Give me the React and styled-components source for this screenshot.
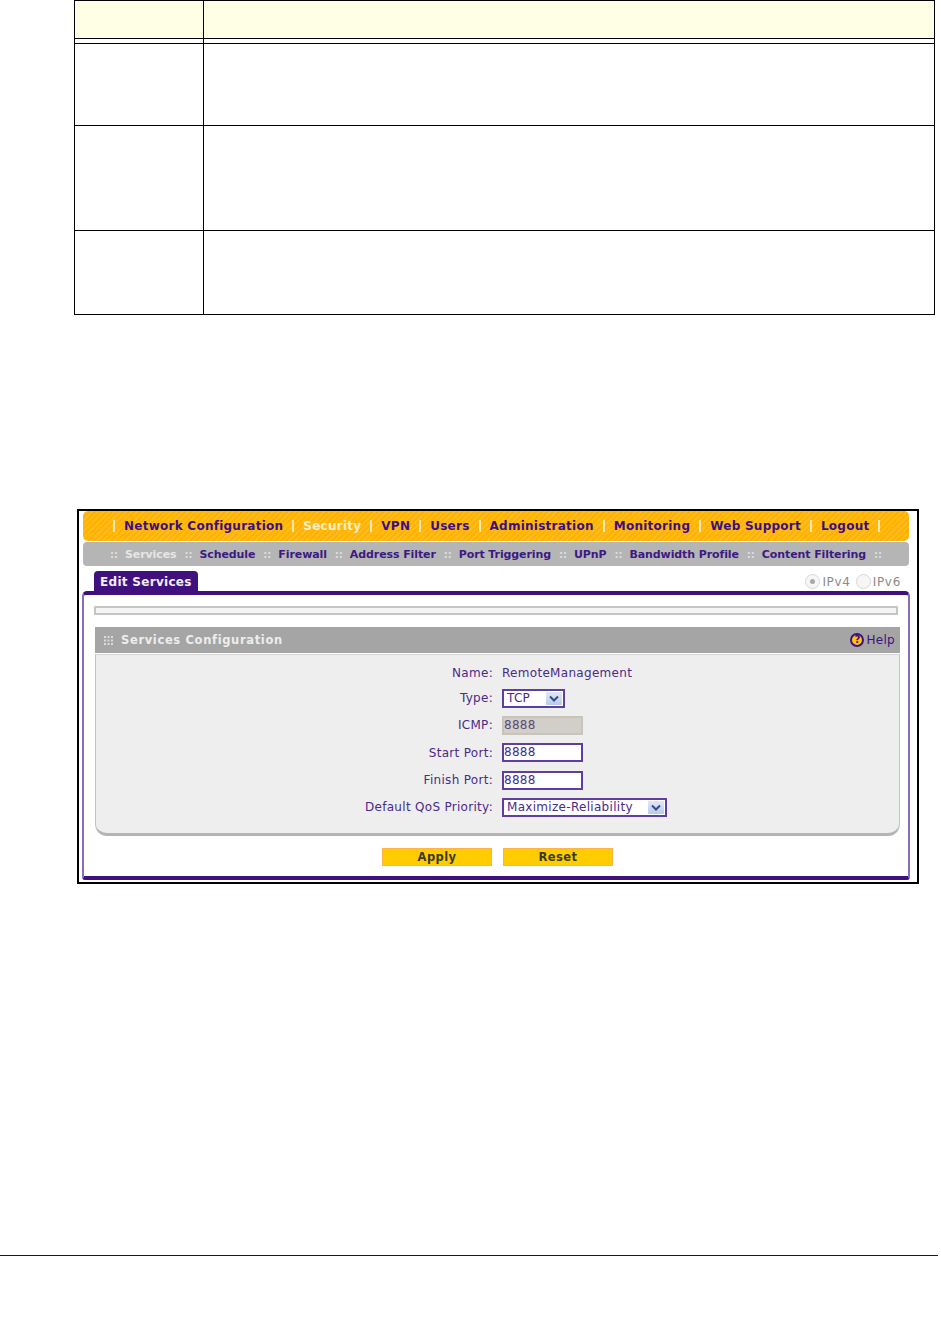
import React from "react"
import styled, { createGlobalStyle } from "styled-components"

const GlobalStyle = createGlobalStyle`
	html, body {
		margin: 0;
		padding: 0;
		background: #fff;
	}
	body {
		font-family: "DejaVu Sans", Verdana, sans-serif;
	}
`

const Page = styled.div`
	width: 941px;
	height: 1323px;
	overflow: hidden;
	display: flex;
	flex-direction: column;
`

/* manual table: only the rules survive, the cells are empty */
const DocTable = styled.div`
	margin-left: 74px;
	width: 861px;
	box-sizing: border-box;
	border-left: 1px solid #000;
	border-right: 1px solid #000;
	border-bottom: 1px solid #000;
`

const DocRow = styled.div`
	display: grid;
	grid-template-columns: 129px 1fr;
	height: ${(p) => p.$height}px;
	box-sizing: border-box;
	border-bottom: ${(p) => (p.$last ? "none" : "1px solid #000")};
	background: ${(p) => (p.$head ? "#ffffe5" : "#fff")};
	border-top: ${(p) => (p.$head ? "1px solid #000" : "none")};
`

const DocCell = styled.div`
	border-right: ${(p) => (p.$first ? "1px solid #000" : "none")};
`

const Shot = styled.div`
	margin: 194px 0 0 77px;
	width: 842px;
	height: 375px;
	box-sizing: border-box;
	border: 2px solid #000;
	padding: 0 8px 2px 4px;
	display: flex;
	flex-direction: column;
	background: #fff;
`

const TopNav = styled.div`
	height: 30px;
	flex: none;
	display: flex;
	align-items: center;
	padding-left: 30px;
	border-radius: 5px;
	background: repeating-linear-gradient(135deg, #ffb300 0 2px, #ffba1c 2px 4px);
`

const TopItem = styled.span`
	font-size: 12px;
	font-weight: 700;
	letter-spacing: 0.25px;
	line-height: 32px;
	white-space: nowrap;
	color: ${(p) => (p.$active ? "#ffefc0" : "#3c0f80")};
`

const TopSep = styled.span`
	width: 2px;
	height: 12px;
	flex: none;
	margin: 0 9px 0 ${(p) => p.$before ?? 9}px;
	background: #ffeab4;
`

const SubNav = styled.div`
	height: 24px;
	margin-top: 1px;
	flex: none;
	display: flex;
	align-items: center;
	padding-left: 26px;
	border-radius: 4px;
	background: #b5b5b5;
`

const SubItem = styled.span`
	font-size: 11px;
	font-weight: 700;
	letter-spacing: -0.1px;
	white-space: nowrap;
	color: ${(p) => (p.$active ? "#e6e6e6" : "#3c1a82")};
`

const SubSep = styled.span`
	font-size: 10px;
	font-weight: 700;
	color: #dedede;
	margin: 0 7px 0 ${(p) => p.$left ?? 8}px;
`

const TabRow = styled.div`
	height: 25px;
	flex: none;
	display: flex;
	align-items: flex-end;
	justify-content: space-between;
	padding: 0 8px 0 11px;
`

const Tab = styled.div`
	width: 104px;
	height: 20px;
	box-sizing: border-box;
	padding-left: 6px;
	border-radius: 4px 4px 0 0;
	background: #40107f;
	color: #f2eef8;
	font-size: 12px;
	font-weight: 700;
	letter-spacing: 0.3px;
	line-height: 23px;
	white-space: nowrap;
`

const IpToggle = styled.div`
	display: flex;
	align-items: center;
	height: 21px;
	margin-bottom: -1px;
	font-size: 12px;
	letter-spacing: 0.7px;
	color: #8a8a8a;
`

const Radio = styled.span`
	width: 15px;
	height: 15px;
	box-sizing: border-box;
	margin: 0 2px 0 ${(p) => p.$offset || 0}px;
	border-radius: 50%;
	border: 1px solid #d8d8d8;
	background: #f6f6f6;
	display: flex;
	align-items: center;
	justify-content: center;

	&::after {
		content: "";
		display: ${(p) => (p.$checked ? "block" : "none")};
		width: 5px;
		height: 5px;
		border-radius: 50%;
		background: #a8a8a8;
	}
`

const Panel = styled.div`
	flex: 1;
	min-height: 0;
	margin: 0 -1px;
	box-sizing: border-box;
	border-top: 4px solid #40107f;
	border-left: 2px solid #8a6cb8;
	border-right: 2px solid #8a6cb8;
	border-bottom: 4px solid #40107f;
	border-radius: 5px 5px 3px 3px;
	padding: 11px 8px 0 11px;
	display: flex;
	flex-direction: column;
`

const ProgressBar = styled.div`
	height: 9px;
	width: 804px;
	margin-left: -1px;
	flex: none;
	box-sizing: border-box;
	border: 2px solid #c4c4c4;
	border-radius: 1px;
	background: #f4f4f4;
`

const SectionHead = styled.div`
	margin-top: 12px;
	height: 26px;
	flex: none;
	display: flex;
	align-items: center;
	background: #a5a5a5;
	padding: 0 5px 0 9px;
`

const Dots = styled.svg`
	width: 9px;
	height: 9px;
	margin-right: 8px;
	flex: none;
`

const SectionTitle = styled.span`
	flex: 1;
	font-size: 11.5px;
	font-weight: 700;
	letter-spacing: 0.65px;
	color: #ededed;
`

const Help = styled.span`
	display: flex;
	align-items: center;
	font-size: 12px;
	letter-spacing: 0.3px;
	color: #40107f;
`

const HelpBadge = styled.span`
	width: 14px;
	height: 14px;
	box-sizing: border-box;
	margin-right: 2px;
	border-radius: 50%;
	border: 2px solid #40107f;
	background: #ffc20e;
	color: #40107f;
	font-size: 10px;
	font-weight: 700;
	line-height: 10px;
	letter-spacing: 0;
	text-align: center;
`

const FormBox = styled.div`
	height: 182px;
	flex: none;
	margin-top: 1px;
	box-sizing: border-box;
	background: #eeeeee;
	border: 1px solid #c4c4c4;
	border-top: 1px solid #d8d8d8;
	border-bottom: 3px solid #b4b4b4;
	border-radius: 0 0 12px 12px;
	padding-top: 5px;
	display: grid;
	grid-template-columns: 397px 1fr;
	grid-template-rows: 25px 26px 28px repeat(3, 27.4px);
	column-gap: 9px;
	align-items: center;
`

const Label = styled.span`
	text-align: right;
	font-size: 12px;
	letter-spacing: 0.3px;
	color: #4a2a8a;
	white-space: nowrap;
`

const Value = styled.span`
	font-size: 12px;
	letter-spacing: 0.3px;
	color: #4a2a8a;
	white-space: nowrap;
`

const SelectBox = styled.div`
	width: ${(p) => p.$width}px;
	height: 19px;
	box-sizing: border-box;
	border: 2px solid #5e3ea0;
	background: #fff;
	display: flex;
	align-items: center;
	justify-content: space-between;
	padding: 0 1px 0 3px;
	font-size: 12px;
	letter-spacing: 0.3px;
	color: #4a2a8a;
`

const SelectArrow = styled.span`
	width: 16px;
	height: 13px;
	display: flex;
	align-items: center;
	justify-content: center;
	background: linear-gradient(#dfe8f8, #b8cbec);
	border-radius: 1px;
`

const TextBox = styled.div`
	width: 81px;
	height: 19px;
	box-sizing: border-box;
	border: 2px solid ${(p) => (p.$disabled ? "#c8c4bc" : "#5e3ea0")};
	background: ${(p) => (p.$disabled ? "#d2cfc8" : "#fff")};
	padding-left: 0;
	font-size: 12px;
	letter-spacing: 0.3px;
	line-height: 15px;
	color: ${(p) => (p.$disabled ? "#5a4a7a" : "#4a2a8a")};
`

const ButtonRow = styled.div`
	display: flex;
	gap: 11px;
	margin: 12px 0 0 287px;
`

const ActionButton = styled.div`
	width: 110px;
	height: 18px;
	box-sizing: border-box;
	border: 1px solid #ffb24a;
	background: #ffcc00;
	color: #3a3a2a;
	font-size: 11.5px;
	font-weight: 700;
	letter-spacing: 0.4px;
	line-height: 17px;
	text-align: center;
`

const FooterRule = styled.div`
	margin-top: 371px;
	width: 938px;
	height: 1px;
	flex: none;
	background: #0000e0;
`

const Chevron = () => (
	<svg width="10" height="7" viewBox="0 0 10 7">
		<path d="M1 1.5 L5 5.5 L9 1.5" fill="none" stroke="#3a4a80" strokeWidth="2" />
	</svg>
)

const topLinks = [
	["Network Configuration"],
	["Security", true],
	["VPN"],
	["Users"],
	["Administration"],
	["Monitoring"],
	["Web Support"],
	["Logout"],
]

const subLinks = [
	["Services", true],
	["Schedule"],
	["Firewall"],
	["Address Filter"],
	["Port Triggering"],
	["UPnP"],
	["Bandwidth Profile"],
	["Content Filtering"],
]

export default function App() {
	return (
		<Page>
			<GlobalStyle />
			<DocTable>
				<DocRow $head $height={39}>
					<DocCell $first />
					<DocCell />
				</DocRow>
				<DocRow $height={5}>
					<DocCell $first />
					<DocCell />
				</DocRow>
				<DocRow $height={82}>
					<DocCell $first />
					<DocCell />
				</DocRow>
				<DocRow $height={105}>
					<DocCell $first />
					<DocCell />
				</DocRow>
				<DocRow $height={83} $last>
					<DocCell $first />
					<DocCell />
				</DocRow>
			</DocTable>

			<Shot>
				<TopNav>
					<TopSep $before={0} />
					{topLinks.map(([name, active]) => (
						<React.Fragment key={name}>
							<TopItem $active={active}>{name}</TopItem>
							<TopSep />
						</React.Fragment>
					))}
				</TopNav>
				<SubNav>
					<SubSep $left={1}>::</SubSep>
					{subLinks.map(([name, active]) => (
						<React.Fragment key={name}>
							<SubItem $active={active}>{name}</SubItem>
							<SubSep>::</SubSep>
						</React.Fragment>
					))}
				</SubNav>
				<TabRow>
					<Tab>Edit Services</Tab>
					<IpToggle>
						<Radio $checked />
						IPv4
						<Radio $offset={5} />
						IPv6
					</IpToggle>
				</TabRow>
				<Panel>
					<ProgressBar />
					<SectionHead>
						<Dots viewBox="0 0 9 9">
							<path
								d="M0 0h2v2H0zM3.5 0h2v2h-2zM7 0h2v2H7zM0 3.5h2v2H0zM3.5 3.5h2v2h-2zM7 3.5h2v2H7zM0 7h2v2H0zM3.5 7h2v2h-2zM7 7h2v2H7z"
								fill="#dcdcdc"
							/>
						</Dots>
						<SectionTitle>Services Configuration</SectionTitle>
						<Help>
							<HelpBadge>?</HelpBadge>
							Help
						</Help>
					</SectionHead>
					<FormBox>
						<Label>Name:</Label>
						<Value>RemoteManagement</Value>
						<Label>Type:</Label>
						<SelectBox $width={63}>
							TCP
							<SelectArrow>
								<Chevron />
							</SelectArrow>
						</SelectBox>
						<Label>ICMP:</Label>
						<TextBox $disabled>8888</TextBox>
						<Label>Start Port:</Label>
						<TextBox>8888</TextBox>
						<Label>Finish Port:</Label>
						<TextBox>8888</TextBox>
						<Label>Default QoS Priority:</Label>
						<SelectBox $width={165}>
							Maximize-Reliability
							<SelectArrow>
								<Chevron />
							</SelectArrow>
						</SelectBox>
					</FormBox>
					<ButtonRow>
						<ActionButton>Apply</ActionButton>
						<ActionButton>Reset</ActionButton>
					</ButtonRow>
				</Panel>
			</Shot>
			<FooterRule />
		</Page>
	)
}
